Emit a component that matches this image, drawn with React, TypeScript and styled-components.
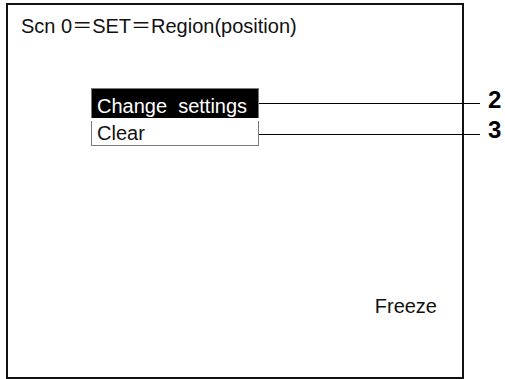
import React from 'react';
import styled, {createGlobalStyle} from "styled-components";

const GlobalStyle = createGlobalStyle`
  html, body {
    margin: 0;
    padding: 0;
    background: #ffffff;
    overflow: hidden;
  }
  body {
    font-family: "Liberation Sans", "Noto Sans CJK JP", Arial, sans-serif;
    color: #111111;
  }
`

const items = [
    {label: "Change  settings", callout: "2", active: true, lineOffset: 0},
    {label: "Clear", callout: "3", active: false, lineOffset: 3},
];

export default function App() {
    return (
        <>
            <GlobalStyle/>
            <Page>
                <Screen>
                    <Title>Scn 0＝SET＝Region(position)</Title>
                    <Menu>
                        {items.map((item, i) => (
                            <MenuRow key={item.callout}>
                                <Item $active={item.active} $first={i === 0} $last={i === items.length - 1}>
                                    {item.label}
                                </Item>
                                <Leader $offset={item.lineOffset}/>
                                <Callout>{item.callout}</Callout>
                            </MenuRow>
                        ))}
                    </Menu>
                    <Status>Freeze</Status>
                </Screen>
            </Page>
        </>
    );
}

const Page = styled.div`
  width: 505px;
  height: 379px;
  padding: 3px 0 0 6px;
  box-sizing: border-box;
`
const Screen = styled.div`
  width: 458px;
  height: 376px;
  box-sizing: border-box;
  border: 2px solid #111111;
  padding: 9px 0 59px 0;
  display: flex;
  flex-direction: column;
`
const Title = styled.div`
  font-size: 20px;
  line-height: 24px;
  padding-left: 13px;
  white-space: pre;
`
const Menu = styled.div`
  margin: 50px 0 0 83px;
  display: flex;
  flex-direction: column;
`
const MenuRow = styled.div`
  display: flex;
  align-items: center;
  width: 414px;
`
const Item = styled.div<{ $active: boolean; $first: boolean; $last: boolean }>`
  width: 168px;
  box-sizing: border-box;
  height: ${p => p.$first ? 30 : 25}px;
  padding: ${p => p.$first ? "5px" : "0"} 0 0 5px;
  font-size: 20px;
  line-height: 24px;
  white-space: pre;
  background: ${p => p.$active ? "#000000" : "#ffffff"};
  color: ${p => p.$active ? "#ffffff" : "#111111"};
  border-left: 1px solid #7a7a7a;
  border-right: 1px solid #7a7a7a;
  border-top: ${p => p.$first ? "1px solid #7a7a7a" : "none"};
  border-bottom: ${p => p.$last ? "1px solid #7a7a7a" : "none"};
`
const Leader = styled.div<{ $offset: number }>`
  width: 221px;
  height: 1px;
  background: #000000;
  margin-top: ${p => p.$offset}px;
`
const Callout = styled.span`
  margin-left: 8px;
  margin-bottom: 6px;
  font-size: 24px;
  line-height: 24px;
  font-weight: bold;
  color: #000000;
`
const Status = styled.div`
  margin-top: auto;
  align-self: flex-end;
  margin-right: 25px;
  font-size: 20px;
  line-height: 24px;
`
